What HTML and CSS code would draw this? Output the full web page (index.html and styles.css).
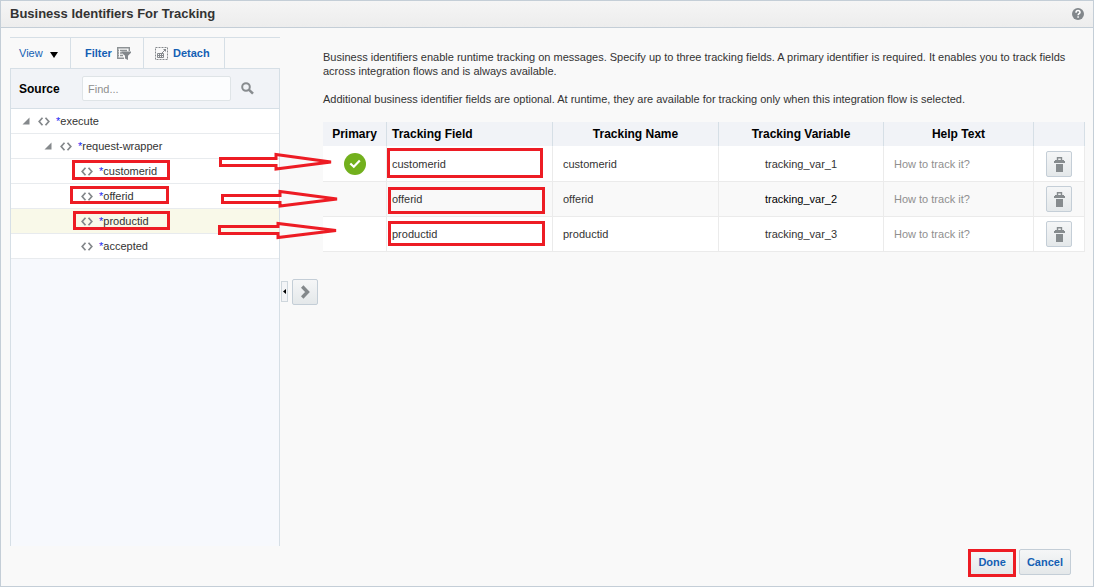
FILE: index.html
```html
<!DOCTYPE html>
<html lang="en">
<head>
<meta charset="utf-8">
<title>Business Identifiers For Tracking</title>
<link rel="stylesheet" href="styles.css">
</head>
<body>
<svg class="defs" width="0" height="0" aria-hidden="true">
  <symbol id="node" viewBox="0 0 12 9"><path d="M4.500 .8 1.200 4.500 4.500 8.200M7.500 .8 10.800 4.500 7.500 8.200" fill="none" stroke="#83878a" stroke-width="1.700"/></symbol>
  <symbol id="open" viewBox="0 0 8 8"><path d="M7.500 .5v7H.5z" fill="#85898c"/></symbol>
  <symbol id="trash" viewBox="0 0 11 15"><path d="M3.500 3V.7h4V3" fill="none" stroke="#868b8e" stroke-width="1.400"/><path d="M1 3h9v1h1v2H0V4h1zM2 7h7v8H2z" fill="#868b8e"/></symbol>
</svg>
<div class="dialog">
  <header class="titlebar">
    <h1>Business Identifiers For Tracking</h1>
    <button class="help" type="button" aria-label="Help">
      <svg width="12" height="12" viewBox="0 0 12 12"><circle cx="6" cy="6" r="6" fill="#82878b"/><path d="M4 4.700C4 3.300 4.800 2.600 6 2.600s2 .7 2 1.800C8 5.700 6.100 5.600 6.100 7.200M6.100 8.300v1.500" fill="none" stroke="#fff" stroke-width="1.500"/></svg>
    </button>
  </header>
  <div class="body">
    <section class="source">
      <div class="toolbar">
        <button class="tool view" type="button">View
          <svg width="8" height="6" viewBox="0 0 8 6"><path d="M0 0h8L4 6z" fill="#000"/></svg>
        </button>
        <button class="tool filter" type="button">Filter
          <svg width="14" height="13" viewBox="0 0 14 13"><path d="M.7 11.300V.7h11.600V4M0 11.300h7M3 3.500h7M3 6h2M3 8.500h3M1 3.500h1M1 6h1M1 8.500h1" fill="none" stroke="#8d9295" stroke-width="1.400"/><path d="M4.500 4.500H14v1.200L11 8.700V13L8 11.500V8.700L4.500 5.700z" fill="#82878b"/></svg>
        </button>
        <button class="tool detach" type="button">
          <svg width="13" height="13" viewBox="0 0 13 13"><path d="M.5 .5h12v12H.5z" fill="none" stroke="#85898d" stroke-dasharray="2 1"/><path d="M2.500 6.500h6v4h-6zM2.500 8.500h6M4.500 6.500v4M6.500 6.500v4M7 6l3-3" fill="none" stroke="#85898d"/><path d="M8 2h3v3z" fill="#85898d"/></svg>
          Detach</button>
      </div>
      <div class="search">
        <label for="find">Source</label>
        <input id="find" type="text" placeholder="Find...">
        <button class="plain" type="button" aria-label="Search">
          <svg width="13" height="13" viewBox="0 0 13 13"><circle cx="5" cy="5" r="3.800" fill="none" stroke="#888c8f" stroke-width="2"/><path d="M7.800 7.600 12 11.600" stroke="#888c8f" stroke-width="2.600"/></svg>
        </button>
      </div>
      <ul class="tree">
        <li class="level1"><svg width="8" height="8"><use href="#open"/></svg><svg width="12" height="9"><use href="#node"/></svg><span><b>*</b>execute</span></li>
        <li class="level2"><svg width="8" height="8"><use href="#open"/></svg><svg width="12" height="9"><use href="#node"/></svg><span><b>*</b>request-wrapper</span></li>
        <li class="level3"><svg width="12" height="9"><use href="#node"/></svg><span><b>*</b>customerid</span></li>
        <li class="level3"><svg width="12" height="9"><use href="#node"/></svg><span><b>*</b>offerid</span></li>
        <li class="level3 selected"><svg width="12" height="9"><use href="#node"/></svg><span><b>*</b>productid</span></li>
        <li class="level3"><svg width="12" height="9"><use href="#node"/></svg><span><b>*</b>accepted</span></li>
      </ul>
    </section>
    <div class="shuttle">
      <button class="collapse" type="button" aria-label="Collapse pane"><svg width="3" height="5" viewBox="0 0 3 5"><path d="M3 0v5L0 2.500z" fill="#000"/></svg></button>
      <button class="btn move" type="button" aria-label="Add field"><svg width="9" height="14" viewBox="0 0 9 14"><path d="M1.200 1.500 6.500 7 1.200 12.500" fill="none" stroke="#83888b" stroke-width="3.400"/></svg></button>
    </div>
    <main class="content">
      <p>Business identifiers enable runtime tracking on messages. Specify up to three tracking fields. A primary identifier is required. It enables you to track fields across integration flows and is always available.</p>
      <p>Additional business identifier fields are optional. At runtime, they are available for tracking only when this integration flow is selected.</p>
      <table>
        <colgroup><col class="c-primary"><col class="c-field"><col class="c-field"><col class="c-var"><col class="c-help"><col class="c-action"></colgroup>
        <thead><tr><th>Primary</th><th class="left">Tracking Field</th><th>Tracking Name</th><th>Tracking Variable</th><th>Help Text</th><th></th></tr></thead>
        <tbody>
          <tr>
            <td class="mark"><svg width="22" height="22" viewBox="0 0 22 22" role="img" aria-label="Primary"><circle cx="11" cy="11" r="11" fill="#72b01d"/><path d="M6.300 10.500 9.800 13.800 15.800 7.500" fill="none" stroke="#fff" stroke-width="2.200"/></svg></td>
            <td class="field">customerid</td>
            <td><input type="text" value="customerid" aria-label="Tracking name 1"></td>
            <td class="var">tracking_var_1</td>
            <td><input type="text" placeholder="How to track it?" aria-label="Help text 1"></td>
            <td class="action"><button class="btn delete" type="button" aria-label="Delete customerid"><svg width="11" height="15"><use href="#trash"/></svg></button></td>
          </tr>
          <tr class="alt">
            <td></td>
            <td class="field">offerid</td>
            <td><input type="text" value="offerid" aria-label="Tracking name 2"></td>
            <td class="var current">tracking_var_2</td>
            <td><input type="text" placeholder="How to track it?" aria-label="Help text 2"></td>
            <td class="action"><button class="btn delete" type="button" aria-label="Delete offerid"><svg width="11" height="15"><use href="#trash"/></svg></button></td>
          </tr>
          <tr>
            <td></td>
            <td class="field">productid</td>
            <td><input type="text" value="productid" aria-label="Tracking name 3"></td>
            <td class="var">tracking_var_3</td>
            <td><input type="text" placeholder="How to track it?" aria-label="Help text 3"></td>
            <td class="action"><button class="btn delete" type="button" aria-label="Delete productid"><svg width="11" height="15"><use href="#trash"/></svg></button></td>
          </tr>
        </tbody>
      </table>
    </main>
  </div>
  <footer class="actions">
    <button class="btn text done" type="button">Done</button>
    <button class="btn text" type="button">Cancel</button>
  </footer>
  <svg class="callouts" width="560" height="260" viewBox="0 0 560 260" aria-hidden="true">
    <rect x="73.500" y="161.500" width="95" height="17"/>
    <rect x="71.500" y="187.500" width="96" height="15"/>
    <rect x="74.500" y="212.500" width="94" height="16"/>
    <rect x="388.500" y="149.500" width="153" height="27"/>
    <rect x="389.500" y="188.500" width="154" height="24"/>
    <rect x="389.500" y="222.500" width="154" height="22"/>
    <path d="M220.500 158.500H276V154.500L331 162 276 169V165.500H220.500z"/>
    <path d="M222.500 195.500H280V191.500L337 199 280 206V202.500H222.500z"/>
    <path d="M219.500 226.500H278V223.500L336 230.500 278 237.500V233.500H219.500z"/>
  </svg>
</div>
</body>
</html>
```

FILE: styles.css
```css
* { box-sizing: border-box; }

body {
  margin: 0;
  background: #f9f9f9;
  color: #333;
  font: 11px/14px "Liberation Sans", Arial, sans-serif;
}

button, input { font: inherit; color: inherit; }

button {
  display: flex;
  align-items: center;
  justify-content: center;
  padding: 0;
  border: 0;
  background: none;
  cursor: pointer;
}

svg { display: block; flex: none; }

.defs { position: absolute; }

.dialog {
  position: relative;
  display: flex;
  flex-direction: column;
  min-height: 100vh;
  border: 1px solid #c4ced7;
}

.titlebar {
  display: flex;
  align-items: center;
  justify-content: space-between;
  height: 27px;
  padding: 0 9px;
  border-bottom: 1px solid #c4ced7;
  background: linear-gradient(#f5f5f5, #ededed);
}

.titlebar h1 {
  margin: 0;
  font-size: 13px;
  line-height: 26px;
  color: #333;
}

.body {
  display: flex;
  flex: 1;
  padding: 9px 9px 0;
}

.source {
  display: flex;
  flex-direction: column;
  width: 270px;
}

.toolbar {
  display: flex;
  height: 31px;
  border-top: 1px solid #d6dfe6;
}

.tool {
  justify-content: flex-start;
  gap: 5px;
  border-right: 1px solid #d6dfe6;
  color: #145fb4;
  font-weight: bold;
}

.view {
  width: 61px;
  gap: 7px;
  padding-left: 9px;
  font-weight: normal;
}

.view svg { margin-top: 4px; }

.filter { width: 73px; padding-left: 14px; }

.detach { width: 81px; padding-left: 11px; }

.search {
  display: flex;
  align-items: center;
  height: 41px;
  padding-left: 8px;
  border: 1px solid #d6dfe6;
  background: #f1f3f7;
}

.search label {
  width: 63px;
  color: #000;
  font-size: 12px;
  font-weight: bold;
}

.search input {
  width: 149px;
  height: 25px;
  margin-right: 10px;
  padding: 0 5px;
  border: 1px solid #dfe4e7;
  border-radius: 2px;
  background: #fcfdfe;
}

input::placeholder { color: #8f8f8f; opacity: 1; }

.tree {
  flex: 1;
  margin: 0;
  padding: 0;
  border: solid #d6dfe6;
  border-width: 0 1px;
  background: #f7f9fd;
  list-style: none;
}

.tree li {
  display: flex;
  align-items: center;
  height: 25px;
  gap: 6px;
  border-bottom: 1px solid #e8ebee;
  background: #fff;
}

.tree b { color: #1c1cf0; font-weight: normal; }

.tree .level1 { padding-left: 11px; }

.tree .level2 { padding-left: 33px; }

.tree .level3 { padding-left: 70px; }

.tree .level1 svg:first-child,
.tree .level2 svg:first-child { margin-right: 2px; }

.tree .selected { background: #f9f9e9; }

.shuttle {
  display: flex;
  align-items: center;
  gap: 4px;
  padding: 0 5px 0 1px;
}

.collapse {
  width: 7px;
  height: 21px;
  border: 1px solid #ced6dc;
  background: #f3f4f6;
}

.btn {
  border: 1px solid #c4ced7;
  border-radius: 2px;
  background: linear-gradient(#f5f6f7, #e4e8ea);
}

.move { width: 26px; height: 26px; }

.content { flex: 1; min-width: 0; padding-top: 13px; }

.content p { margin: 0 0 14px; }

table {
  width: 100%;
  margin-top: 16px;
  border-collapse: separate;
  border-spacing: 0;
  table-layout: fixed;
}

.c-primary { width: 64px; }
.c-field { width: 166px; }
.c-var { width: 165px; }
.c-help { width: 150px; }
.c-action { width: 51px; }

th {
  height: 25px;
  padding: 0 5px;
  border-right: 1px solid #d6dfe6;
  border-bottom: 1px solid #fff;
  background: #f1f3f7;
  color: #000;
  font-size: 12px;
}

th.left { text-align: left; }

td {
  height: 35px;
  padding: 0;
  border-right: 1px solid #ebebeb;
  border-bottom: 1px solid #ebebeb;
  background: #fff;
}

.alt td { background: #f9f9f9; }

.mark svg { margin: 0 auto; }

.field { padding-left: 5px; }

.var { text-align: center; }

.current { color: #000; }

td input {
  width: 100%;
  padding: 0 10px;
  border: 0;
  background: transparent;
}

.delete {
  width: 26px;
  height: 26px;
  margin: 0 auto;
}

.actions {
  display: flex;
  justify-content: flex-end;
  gap: 3px;
  height: 40px;
  padding: 3px 22px 0 0;
}

.text {
  height: 26px;
  padding: 0 7px;
  color: #145fb4;
  font-weight: bold;
}

.done {
  height: 28px;
  padding-bottom: 2px;
  border: 3px solid #ed1c24;
  border-radius: 0;
}

.callouts {
  position: absolute;
  top: -1px;
  left: -1px;
  fill: none;
  stroke: #ed1c24;
  stroke-width: 3;
  pointer-events: none;
}
```
